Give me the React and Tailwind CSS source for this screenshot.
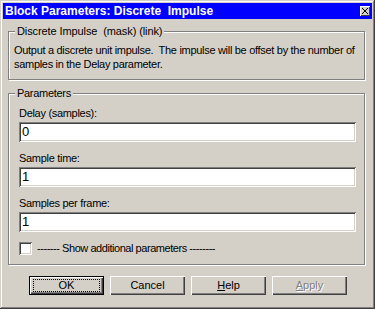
import React from "react";

const font = "font-['Liberation_Sans',Arial,sans-serif]";

function Field({ value }) {
  return (
    <div className="w-[337px] h-[20px] bg-white shadow-[inset_1px_1px_#808080,inset_-1px_-1px_#ffffff,inset_2px_2px_#404040,inset_-2px_-2px_#d4d0c8] pl-[3px] text-[13px] leading-[19px] text-black">
      {value}
    </div>
  );
}

function Btn({ children, def, disabled }) {
  return (
    <div
      className={
        "relative w-[75px] h-[19px] flex items-center justify-center text-[11px] " +
        (def
          ? "border border-black shadow-[inset_1px_1px_#ffffff,inset_-1px_-1px_#404040,inset_-2px_-2px_#808080]"
          : "shadow-[inset_1px_1px_#ffffff,inset_-1px_-1px_#404040,inset_-2px_-2px_#808080]") +
        (disabled ? " text-[#808080] [text-shadow:1px_1px_0_#ffffff]" : " text-black")
      }
    >
      {def && (
        <div className="absolute left-[3px] right-[3px] top-[2px] bottom-[2px] border border-dotted border-black" />
      )}
      <span className="relative">{children}</span>
    </div>
  );
}

export default function App() {
  return (
    <div
      className={
        "w-[375px] h-[309px] bg-[#d4d0c8] p-[3px] shadow-[inset_-1px_-1px_#404040,inset_1px_1px_#d4d0c8,inset_-2px_-2px_#808080,inset_2px_2px_#ffffff] " +
        font
      }
    >
      {/* Title bar */}
      <div className="h-[16px] bg-[#0000ff] flex items-center justify-between pl-[2px] pr-[2px]">
        <span className="text-white font-bold text-[12px] leading-[16px] whitespace-pre">
          Block Parameters: Discrete  Impulse
        </span>
        <div className="w-[10px] h-[10px] bg-[#d4d0c8] shadow-[inset_1px_1px_#ffffff,inset_-1px_-1px_#404040] flex items-center justify-center">
          <svg width="6" height="6" viewBox="0 0 6 6" shapeRendering="crispEdges">
            <path d="M0 0h1v1h-1zM1 1h1v1h-1zM2 2h2v2h-2zM4 1h1v1h-1zM5 0h1v1h-1zM1 4h1v1h-1zM0 5h1v1h-1zM4 4h1v1h-1zM5 5h1v1h-1z" fill="#000" />
          </svg>
        </div>
      </div>

      {/* Group 1 */}
      <div className="relative ml-[5px] mt-[12px] w-[357px] h-[49px] border border-[#808080] shadow-[inset_1px_1px_#ffffff,1px_1px_#ffffff] pt-[11px] pl-[5px] tracking-[-0.3px]">
        <span className="absolute -top-[7px] left-[6px] px-[2px] bg-[#d4d0c8] text-[11px] leading-[13px] text-black whitespace-pre tracking-[-0.1px]">
          Discrete Impulse  (mask) (link)
        </span>
        <div className="text-[11px] leading-[14px] text-black whitespace-pre">
          {"Output a discrete unit impulse.  The impulse will be offset by the number of\nsamples in the Delay parameter."}
        </div>
      </div>

      {/* Group 2 */}
      <div className="relative ml-[5px] mt-[13px] w-[357px] h-[172px] border border-[#808080] shadow-[inset_1px_1px_#ffffff,1px_1px_#ffffff] pt-[13px] pl-[10px] flex flex-col tracking-[-0.3px]">
        <span className="absolute -top-[7px] left-[6px] px-[2px] bg-[#d4d0c8] text-[11px] leading-[13px] text-black">
          Parameters
        </span>
        <div className="text-[11px] leading-[13px] text-black mb-[2px]">Delay (samples):</div>
        <Field value="0" />
        <div className="text-[11px] leading-[13px] text-black mt-[10px] mb-[2px]">Sample time:</div>
        <Field value="1" />
        <div className="text-[11px] leading-[13px] text-black mt-[10px] mb-[2px]">Samples per frame:</div>
        <Field value="1" />
        <div className="flex items-center mt-[10px]">
          <div className="w-[13px] h-[13px] bg-white shadow-[inset_1px_1px_#808080,inset_-1px_-1px_#ffffff,inset_2px_2px_#404040,inset_-2px_-2px_#d4d0c8]" />
          <span className="ml-[5px] text-[11px] leading-[13px] text-black whitespace-pre tracking-[-0.45px]">
            ------- Show additional parameters --------
          </span>
        </div>
      </div>

      {/* Buttons */}
      <div className="flex gap-[6px] mt-[11px] pl-[26px]">
        <Btn def>OK</Btn>
        <Btn>Cancel</Btn>
        <Btn>
          <span className="underline">H</span>elp
        </Btn>
        <Btn disabled>
          <span className="underline">A</span>pply
        </Btn>
      </div>
    </div>
  );
}
